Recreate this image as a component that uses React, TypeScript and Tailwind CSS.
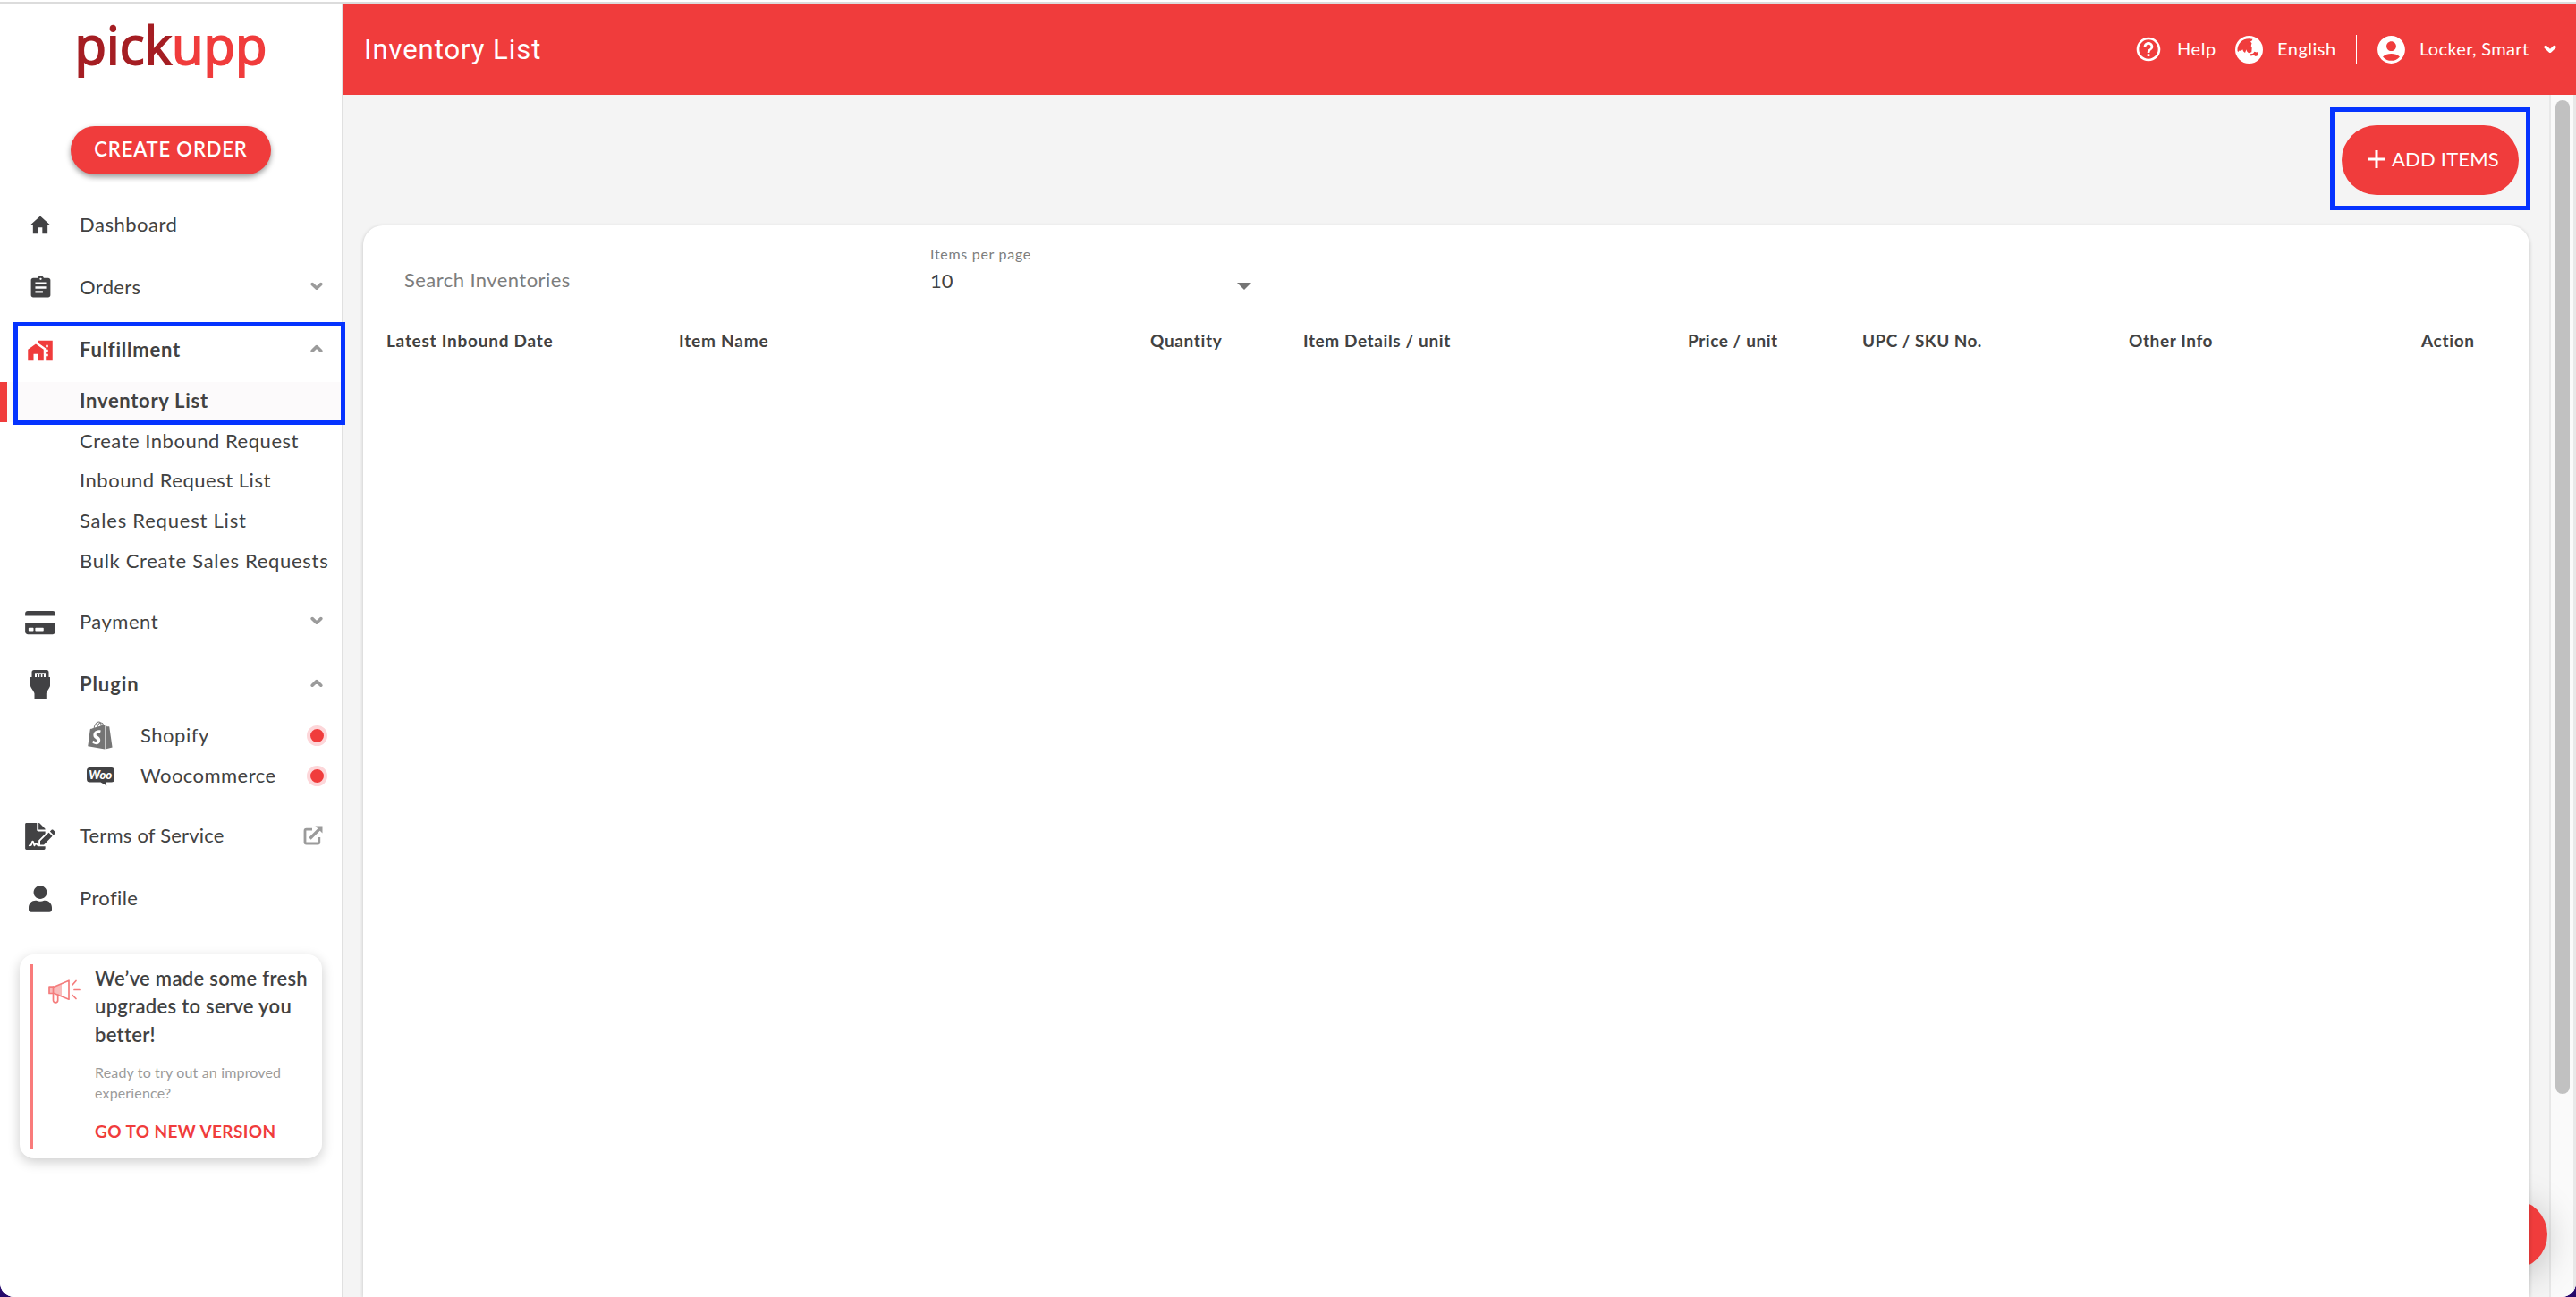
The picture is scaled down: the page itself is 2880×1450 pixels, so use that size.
import type { ReactNode } from 'react';
import { FaCreditCard, FaFileSignature, FaShopify, FaUser } from 'react-icons/fa';
import { MdAccountCircle, MdAssignment, MdHelpOutline, MdHome, MdHomeWork } from 'react-icons/md';

function Chevron({ up = false, className = '' }: { up?: boolean; className?: string }) {
  return (
    <svg viewBox="0 0 14 10" className={`w-3.5 h-2.5 shrink-0 ${className}`} fill="none" stroke="currentColor" strokeWidth="3.6" strokeLinecap="round" strokeLinejoin="round">
      <path d={up ? 'M2.2 7.2 7 2.6l4.8 4.6' : 'M2.2 2.6 7 7.2l4.8-4.6'} />
    </svg>
  );
}

function PlugIcon() {
  return (
    <svg viewBox="0 0 22 33" className="w-[22px] h-[33px]" fill="currentColor">
      <path
        fillRule="evenodd"
        d="M4 0h14a2.500 2.500 0 0 1 2.500 2.500V8H22v9.500c0 2.500-4.200 6.500-4.200 9V33H4.500v-6.500c0-2.500-4.500-6.500-4.500-9V8h1.500V2.500A2.500 2.500 0 0 1 4 0ZM5 3.200V8h2V4.800h1.600V8h1.600V4.800h1.600V8h1.600V4.800H15V8h2V3.200Z"
      />
    </svg>
  );
}

function WooIcon() {
  return (
    <svg viewBox="0 0 31 21" className="mt-1 w-[31px] h-[21px]">
      <path fill="#424244" d="M3.5 0h24A3.5 3.5 0 0 1 31 3.5V13a3.5 3.5 0 0 1-3.5 3.500H21l1.300 4-6.800-4h-12A3.500 3.500 0 0 1 0 13V3.500A3.500 3.500 0 0 1 3.500 0Z" />
      <text x="15.3" y="13" textAnchor="middle" textLength="26" lengthAdjust="spacingAndGlyphs" fill="#fff" className="font-['Lato',sans-serif] text-[14px] font-black italic">
        Woo
      </text>
    </svg>
  );
}

function ExternalIcon() {
  return (
    <svg viewBox="0 0 22 22" className="w-[22px] h-[22px] text-[#9b9b9b]" fill="none" stroke="currentColor" strokeWidth="2.8">
      <path d="M10 4.2H3.5A1.5 1.5 0 0 0 2 5.700v12.800A1.500 1.500 0 0 0 3.500 20h12.800a1.500 1.500 0 0 0 1.500-1.500V13" />
      <path strokeWidth="3.2" d="M7.5 14.5l11-11" />
      <path fill="currentColor" stroke="none" d="M13.5.5h8v8Z" />
    </svg>
  );
}

function MegaphoneIcon() {
  return (
    <svg viewBox="0 0 36 27" className="w-9 h-[27px]" fill="none" stroke="#f47c7c" strokeWidth="1.7" strokeLinecap="round" strokeLinejoin="round">
      <path fill="#f9bcbc" stroke="none" d="M1 8h6l8-3v13.500l-8-3H1Z" />
      <path d="M1 8.200h5.500L23 1.200v21L6.500 15.500H1Z" />
      <path d="M5.500 8.200v7.300M5.500 15.500v7.700a2.600 2.600 0 0 0 5.200 0v-6" />
      <path d="M27 6l4-4.500M29 11.500h6M27 17.500l4 4" />
    </svg>
  );
}

function GlobeIcon() {
  return (
    <svg viewBox="0 0 31 31" className="w-[31px] h-[31px]">
      <circle cx="15.5" cy="15.5" r="15.5" fill="#fff" />
      <path fill="#f03c3c" d="M2.500 17C2 9 8 2.800 16 3.200l3.500.6-.8 1.600L17 6.500l1.500 1.700-.8 3 1 2.300-.4 4.800-3.300 1-2-2-.5-2-1.500 3.700-1.800-1.500-1-2.300-1.700 1.800-2-.6-1 1.500Z" />
      <path fill="#f03c3c" d="m16 20.500 4-.8 1.500-2 2.300.7 1.500-.4.200 4-2.700 1-2-1.300-3.300.8Z" />
    </svg>
  );
}

interface NavRowProps {
  icon: ReactNode;
  label: string;
  tracking: string;
  active?: boolean;
  trailing?: ReactNode;
}

function NavRow({ icon, label, tracking, active, trailing }: NavRowProps) {
  return (
    <div className="flex h-[70px] shrink-0 items-center pr-[21px] pl-[25px]">
      <div className="flex w-10 justify-center pt-[3px] text-[#424244]">{icon}</div>
      <span className={`ml-6 flex-1 ${active ? 'font-bold' : ''} ${tracking}`}>{label}</span>
      {trailing}
    </div>
  );
}

const inventoryLinks = [
  { label: 'Inventory List', tracking: 'tracking-[0.7px]', active: true },
  { label: 'Create Inbound Request', tracking: 'tracking-[0.52px]' },
  { label: 'Inbound Request List', tracking: 'tracking-[0.52px]' },
  { label: 'Sales Request List', tracking: 'tracking-[0.78px]' },
  { label: 'Bulk Create Sales Requests', tracking: 'tracking-[0.69px]' },
];

const plugins = [
  { label: 'Shopify', tracking: 'tracking-[0.54px]', icon: <FaShopify className="w-7 h-8 text-[#757575]" /> },
  { label: 'Woocommerce', tracking: 'tracking-[0.45px]', icon: <WooIcon /> },
];

const columns = [
  { label: 'Latest Inbound Date', className: 'w-[327px] tracking-[0.75px]' },
  { label: 'Item Name', className: 'w-[527px] tracking-[0.8px]' },
  { label: 'Quantity', className: 'w-[171px] tracking-[0.65px]' },
  { label: 'Item Details / unit', className: 'w-[430px] tracking-[0.6px]' },
  { label: 'Price / unit', className: 'w-[195px] tracking-[0.55px]' },
  { label: 'UPC / SKU No.', className: 'w-[298px] tracking-[0.4px]' },
  { label: 'Other Info', className: 'w-[327px] tracking-[0.6px]' },
  { label: 'Action', className: 'tracking-[0.66px]' },
];

function Sidebar() {
  return (
    <aside className="flex w-96 shrink-0 flex-col border-r-2 border-[#e0e0e0] bg-white text-[22px] text-[#424242]">
      {/* Logo */}
      <div className="flex h-[137px] justify-center font-['Open_Sans',sans-serif] text-[58px] leading-[96px] font-medium text-[#f03c3c]">
        <div className="-mt-0.5 [-webkit-text-stroke:1.800px_currentColor]">
          <span className="text-[#a51e23]">pick</span>upp
        </div>
      </div>

      <button className="mb-5 ml-[79px] flex h-[54px] w-[224px] shrink-0 items-center justify-center rounded-[27px] bg-[#f03c3c] font-semibold tracking-[0.85px] text-white shadow-[0_3px_6px_rgba(0,0,0,0.4)]">
        <span className="pb-[3px]">CREATE ORDER</span>
      </button>

      <nav className="flex flex-col">
        <NavRow label="Dashboard" tracking="tracking-[0.5px]" icon={<MdHome className="size-7" />} />
        <NavRow label="Orders" tracking="tracking-[0.35px]" icon={<MdAssignment className="size-[29px]" />} trailing={<Chevron className="text-[#9b9b9b]" />} />
        <NavRow
          label="Fulfillment"
          tracking="tracking-[0.75px]"
          active
          icon={<MdHomeWork className="size-[30px] text-[#f03c3c]" />}
          trailing={<Chevron up className="text-[#9b9b9b]" />}
        />
        <div className="pt-0.5 pb-[9px]">
          {inventoryLinks.map((link) => (
            <div
              key={link.label}
              className={`h-[44.67px] leading-[41px] ${link.tracking} ${link.active ? 'border-l-8 border-[#f03c3c] bg-[#fcfafb] pl-[81px] font-bold' : 'pl-[89px]'}`}
            >
              {link.label}
            </div>
          ))}
        </div>

        <NavRow label="Payment" tracking="tracking-[0.5px]" icon={<FaCreditCard className="w-[34px] h-[30px]" />} trailing={<Chevron className="text-[#9b9b9b]" />} />
        <NavRow label="Plugin" tracking="tracking-[0.9px]" active icon={<PlugIcon />} trailing={<Chevron up className="text-[#9b9b9b]" />} />
        <div className="pt-0.5 pb-2">
          {plugins.map((plugin) => (
            <div key={plugin.label} className="flex h-[44.67px] items-center pr-4 pb-1 pl-[96px]">
              <div className="flex w-8 justify-center">{plugin.icon}</div>
              <span className={`ml-[29px] flex-1 ${plugin.tracking}`}>{plugin.label}</span>
              <span className="size-[23px] translate-y-px rounded-full border-4 border-[#fdd6d9] bg-[#f03c3c]" />
            </div>
          ))}
        </div>

        <NavRow label="Terms of Service" tracking="tracking-[0.2px]" icon={<FaFileSignature className="w-[34px] h-[30px]" />} trailing={<ExternalIcon />} />
        <NavRow label="Profile" tracking="tracking-[0.4px]" icon={<FaUser className="w-[26px] h-[30px]" />} />
      </nav>

      {/* Upgrade notice */}
      <div className="mt-7 ml-[22px] flex h-[228px] w-[338px] shrink-0 rounded-2xl bg-white shadow-[0_4px_14px_rgba(0,0,0,0.2)]">
        <div className="my-[11px] ml-3 w-[3px] bg-[#f97b7b]" />
        <div className="mt-7 ml-[17px] w-9">
          <MegaphoneIcon />
        </div>
        <div className="ml-4 pt-[11px]">
          <p className="leading-[31.5px] font-semibold tracking-[0.3px] whitespace-nowrap">
            We’ve made some fresh
            <br />
            upgrades to serve you
            <br />
            better!
          </p>
          <p className="mt-[15px] text-base leading-[23px] tracking-[0.16px] text-[#9b9b9b]">
            Ready to try out an improved
            <br />
            experience?
          </p>
          <a className="mt-5 block text-[19px] leading-6 font-bold tracking-[0.4px] text-[#f03c3c]">GO TO NEW VERSION</a>
        </div>
      </div>
    </aside>
  );
}

function TopBar() {
  return (
    <header className="flex h-[102px] shrink-0 items-center bg-[#f03c3c] pr-[22px] pl-[23px] text-xl text-white">
      <h1 className="flex-1 pt-px font-['Roboto',sans-serif] text-[31px] tracking-[0.95px]">Inventory List</h1>
      <MdHelpOutline className="size-8" />
      <span className="ml-4 w-[65px] pb-[3px] tracking-[0.6px]">Help</span>
      <GlobeIcon />
      <span className="ml-4 w-[88px] pb-[3px] tracking-[0.5px]">English</span>
      <span className="h-8 w-px bg-white" />
      <MdAccountCircle className="ml-5 size-[37px]" />
      <span className="ml-[13px] w-[139px] pb-[3px] tracking-[0.33px]">Locker, Smart</span>
      <Chevron />
    </header>
  );
}

function InventoryCard() {
  return (
    <section className="relative ml-[22px] flex w-[2422px] flex-1 flex-col rounded-t-[22px] bg-white text-[#424242] shadow-[0_1px_4px_rgba(0,0,0,0.2)]">
      {/* Filters */}
      <div className="flex h-[85px] pl-[45px] text-[22px]">
        <div className="mr-[45px] flex w-[544px] items-end border-b border-[#e0e0e0] pb-[9px] pl-px leading-7 tracking-[0.43px] text-[#7d7d7d]">Search Inventories</div>
        <div className="flex w-[370px] flex-col border-b border-[#e0e0e0] pt-[22px]">
          <span className="text-base leading-5 tracking-[0.7px] text-[#7d7d7d]">Items per page</span>
          <div className="mt-1.5 flex justify-between pr-[11px] leading-7">
            10
            <span className="mt-4 h-0 border-x-8 border-t-8 border-x-transparent border-t-[#757575]" />
          </div>
        </div>
      </div>

      {/* Table header */}
      <div className="mt-[30px] flex pl-[26px] text-[19px] leading-7 font-bold">
        {columns.map((column) => (
          <div key={column.label} className={`shrink-0 ${column.className}`}>
            {column.label}
          </div>
        ))}
      </div>
    </section>
  );
}

export default function App() {
  return (
    <div className="relative h-[1450px] w-[2880px] overflow-hidden bg-[#27096b] font-['Lato',sans-serif]">
      <div className="flex h-full flex-col overflow-hidden rounded-b-[16px] bg-white">
        <div className="mt-0.5 h-0.5 shrink-0 bg-[#dcdcdc]" />
        <div className="flex min-h-0 flex-1">
          <Sidebar />
          <div className="flex flex-1 flex-col">
            <TopBar />
            <div className="flex min-h-0 flex-1">
              <main className="relative flex w-[2466px] flex-col bg-[#f4f4f4]">
                <div className="flex h-[146px] shrink-0 items-start justify-end pt-[34px] pr-[34px]">
                  <button className="flex h-[78px] w-[198px] items-center rounded-full bg-[#f03c3c] pb-0.5 pl-[29px] text-[22px] tracking-[0.2px] text-white">
                    <svg viewBox="0 0 20 20" className="size-5" stroke="currentColor" strokeWidth="3">
                      <path d="M10 0v20M0 10h20" />
                    </svg>
                    <span className="ml-[7px] pb-px">ADD ITEMS</span>
                  </button>
                </div>
                <div className="absolute top-[1235px] left-[2386px] size-[78px] rounded-full bg-[#f03c3c] shadow-[0_6px_40px_rgba(0,0,0,0.22)]" />
                <InventoryCard />
              </main>
              {/* Scrollbar */}
              <div className="flex flex-1 justify-center border-r-[3px] border-l-2 border-[#e8e8e8] bg-[#fafafa] pt-1.5">
                <div className="h-[1111px] w-4 rounded-full bg-[#c1c1c1]" />
              </div>
            </div>
          </div>
        </div>
      </div>

      {/* Highlight frames */}
      <div className="absolute top-[360px] left-[15px] h-[115px] w-[371px] border-[5px] border-[#0533ff]" />
      <div className="absolute top-[120px] left-[2605px] h-[115px] w-[224px] border-[5px] border-[#0533ff]" />
    </div>
  );
}
